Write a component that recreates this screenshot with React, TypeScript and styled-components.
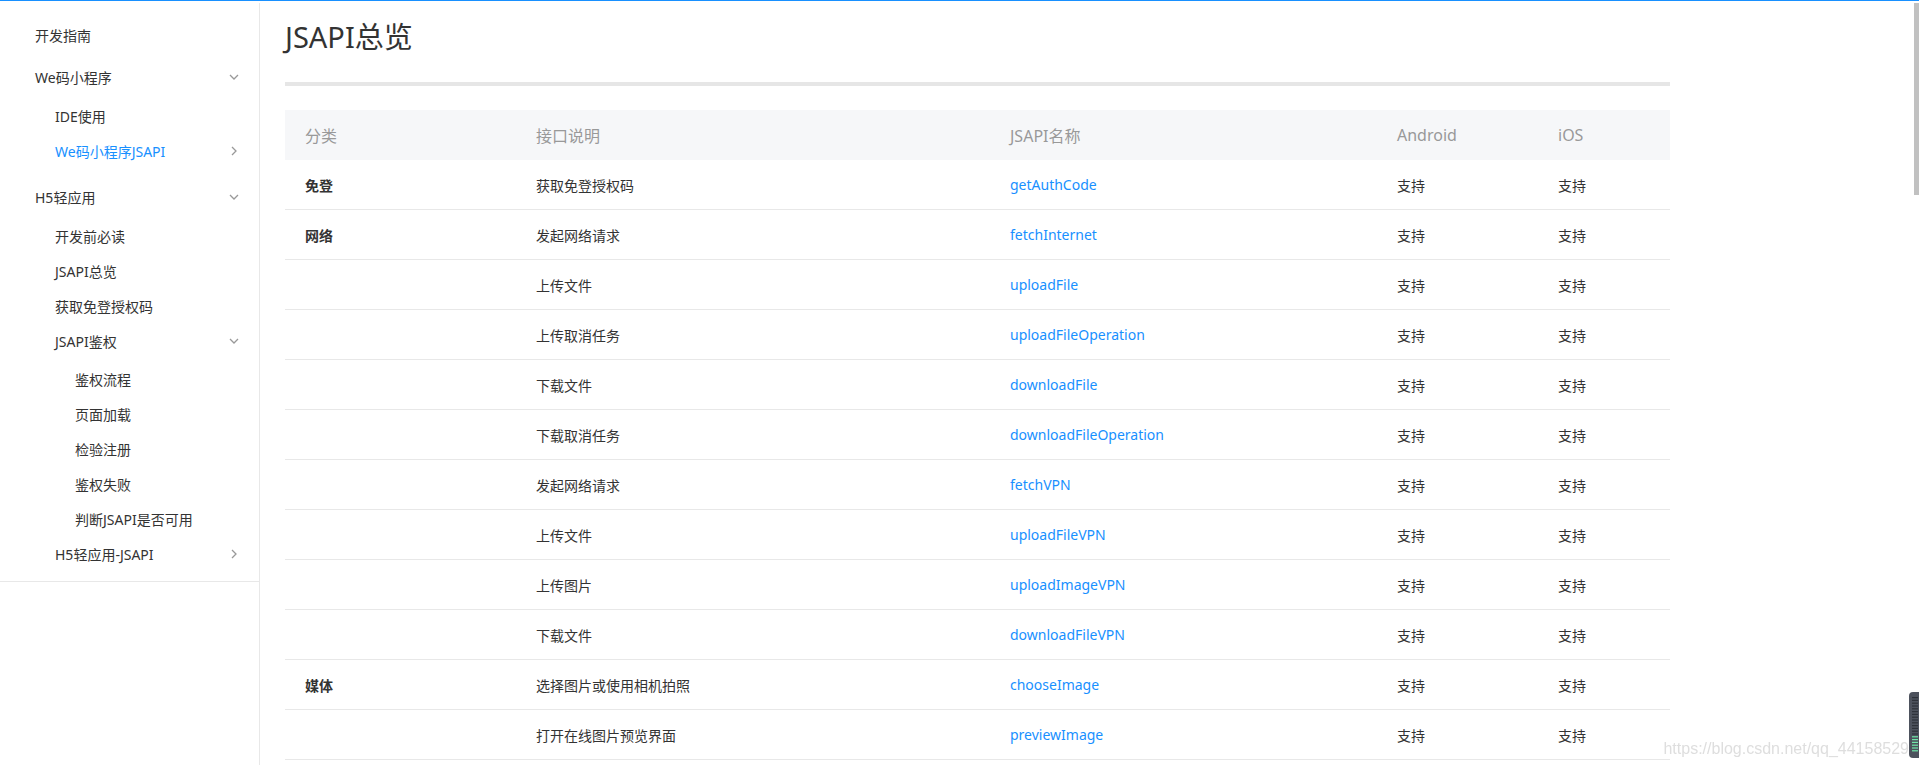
import styled, { createGlobalStyle } from 'styled-components'

const GlobalStyle = createGlobalStyle`
  html, body {
    margin: 0;
    padding: 0;
    height: 100%;
    overflow: hidden;
  }
  body {
    font-family: "Noto Sans", "Noto Sans CJK SC", sans-serif;
    color: #333;
    background: #fff;
  }
`

interface MenuNode {
  label: string
  active?: boolean
  arrow?: 'down' | 'right'
  children?: MenuNode[]
}

const menu: MenuNode[] = [
  { label: '开发指南' },
  {
    label: 'We码小程序',
    arrow: 'down',
    children: [
      { label: 'IDE使用' },
      { label: 'We码小程序JSAPI', active: true, arrow: 'right' },
    ],
  },
  {
    label: 'H5轻应用',
    arrow: 'down',
    children: [
      { label: '开发前必读' },
      { label: 'JSAPI总览' },
      { label: '获取免登授权码' },
      {
        label: 'JSAPI鉴权',
        arrow: 'down',
        children: [
          { label: '鉴权流程' },
          { label: '页面加载' },
          { label: '检验注册' },
          { label: '鉴权失败' },
          { label: '判断JSAPI是否可用' },
        ],
      },
      { label: 'H5轻应用-JSAPI', arrow: 'right' },
    ],
  },
]

const rows = [
  ['免登', '获取免登授权码', 'getAuthCode'],
  ['网络', '发起网络请求', 'fetchInternet'],
  ['', '上传文件', 'uploadFile'],
  ['', '上传取消任务', 'uploadFileOperation'],
  ['', '下载文件', 'downloadFile'],
  ['', '下载取消任务', 'downloadFileOperation'],
  ['', '发起网络请求', 'fetchVPN'],
  ['', '上传文件', 'uploadFileVPN'],
  ['', '上传图片', 'uploadImageVPN'],
  ['', '下载文件', 'downloadFileVPN'],
  ['媒体', '选择图片或使用相机拍照', 'chooseImage'],
  ['', '打开在线图片预览界面', 'previewImage'],
]

const Arrow = ({ dir }: { dir: 'down' | 'right' }) =>
  dir === 'down' ? (
    <svg width="10" height="6" viewBox="0 0 10 6">
      <path d="M1 1l4 4 4-4" stroke="#999" strokeWidth="1.3" fill="none" />
    </svg>
  ) : (
    <svg width="6" height="10" viewBox="0 0 6 10">
      <path d="M1 1l4 4-4 4" stroke="#999" strokeWidth="1.3" fill="none" />
    </svg>
  )

const MenuList = ({ items, level }: { items: MenuNode[]; level: number }) => (
  <SubList $level={level}>
    {items.map((item) => (
      <li key={item.label}>
        <MenuItem $level={level} $active={item.active}>
          <span>{item.label}</span>
          {item.arrow && <ArrowBox>{<Arrow dir={item.arrow} />}</ArrowBox>}
        </MenuItem>
        {item.children && <MenuList items={item.children} level={level + 1} />}
      </li>
    ))}
  </SubList>
)

export default function App() {
  return (
    <>
      <GlobalStyle />
      <TopLine />
      <Body>
        <Sidebar>
          <MenuList items={menu} level={1} />
        </Sidebar>
        <Main>
          <Title>JSAPI总览</Title>
          <Divider />
          <Table>
            <HeadRow>
              <div>分类</div>
              <div>接口说明</div>
              <div>JSAPI名称</div>
              <div>Android</div>
              <div>iOS</div>
            </HeadRow>
            {rows.map((r, i) => (
              <Row key={i}>
                <Category>{r[0]}</Category>
                <div>{r[1]}</div>
                <ApiLink>{r[2]}</ApiLink>
                <div>支持</div>
                <div>支持</div>
              </Row>
            ))}
          </Table>
        </Main>
      </Body>
      <ScrollThumb />
      <Watermark>https://blog.csdn.net/qq_44158529</Watermark>
      <Meter>
        <svg width="10" height="66" viewBox="0 0 10 66">
          {Array.from({ length: 20 }).map((_, i) => (
            <rect
              key={i}
              x="3"
              y={5 + i * 2.8}
              width="6"
              height="1.2"
              fill={i >= 14 ? '#6ee7a8' : '#2e323a'}
            />
          ))}
        </svg>
      </Meter>
    </>
  )
}

const TopLine = styled.div`
  height: 3px;
  box-sizing: border-box;
  border-top: 1px solid #1890ff;
`

const Body = styled.div`
  display: flex;
  height: calc(100vh - 3px);
  overflow: hidden;
`

const Sidebar = styled.aside`
  flex: 0 0 260px;
  box-sizing: border-box;
  border-right: 1px solid #e8e8e8;

  & > ul {
    padding: 11px 0 2px;
    border-bottom: 1px solid #e8e8e8;
  }
`

const SubList = styled.ul<{ $level: number }>`
  list-style: none;
  margin: 0;
  padding: ${(p) => (p.$level === 2 ? '0 0 8px' : p.$level === 3 ? '3px 0 0' : '0')};
`

const MenuItem = styled.div<{ $level: number; $active?: boolean }>`
  display: flex;
  align-items: center;
  justify-content: space-between;
  height: ${(p) => (p.$level === 1 ? 42 : 35)}px;
  padding: 0 20px 0 ${(p) => 15 + p.$level * 20}px;
  font-size: 14px;
  color: ${(p) => (p.$active ? '#1890ff' : '#333')};
  cursor: pointer;
`

const ArrowBox = styled.span`
  display: flex;
  width: 10px;
  justify-content: center;
`

/* the page is long; only the top of the table shows */
const Main = styled.main`
  flex: 1;
  padding: 0 25px;
  min-height: 3020px;
`

const Title = styled.h1`
  margin: 14px 0 0;
  font-size: 29px;
  line-height: 40px;
  font-weight: normal;
  color: #333;
`

const Divider = styled.div`
  width: 1385px;
  height: 4px;
  margin-top: 25px;
  background: #e6e6e6;
`

const Table = styled.div`
  width: 1385px;
  margin-top: 24px;
`

const HeadRow = styled.div`
  display: grid;
  grid-template-columns: 231px 474px 387px 161px 1fr;
  align-items: center;
  height: 50px;
  background: #f6f7f9;
  font-size: 16px;
  color: #999;

  & > div {
    padding-left: 20px;
  }
`

const Row = styled.div`
  display: grid;
  grid-template-columns: 231px 474px 387px 161px 1fr;
  align-items: center;
  height: 50px;
  box-sizing: border-box;
  border-bottom: 1px solid #e8e8e8;
  font-size: 14px;
  color: #333;

  & > div {
    padding-left: 20px;
  }
`

const Category = styled.div`
  font-weight: bold;
`

const ApiLink = styled.div`
  color: #1890ff;
  cursor: pointer;
`

const ScrollThumb = styled.div`
  position: fixed;
  top: 3px;
  right: 0;
  width: 5px;
  height: 192px;
  background: #c1c1c1;
`

const Watermark = styled.div`
  position: fixed;
  right: 10px;
  bottom: 7px;
  font-family: "Liberation Sans", Arial, sans-serif;
  font-size: 16px;
  color: rgba(190, 190, 190, 0.5);
  pointer-events: none;
`

const Meter = styled.div`
  position: fixed;
  right: 0;
  bottom: 7px;
  width: 10px;
  height: 66px;
  background: #4d525d;
  border-radius: 4px 0 0 4px;
  overflow: hidden;
`
